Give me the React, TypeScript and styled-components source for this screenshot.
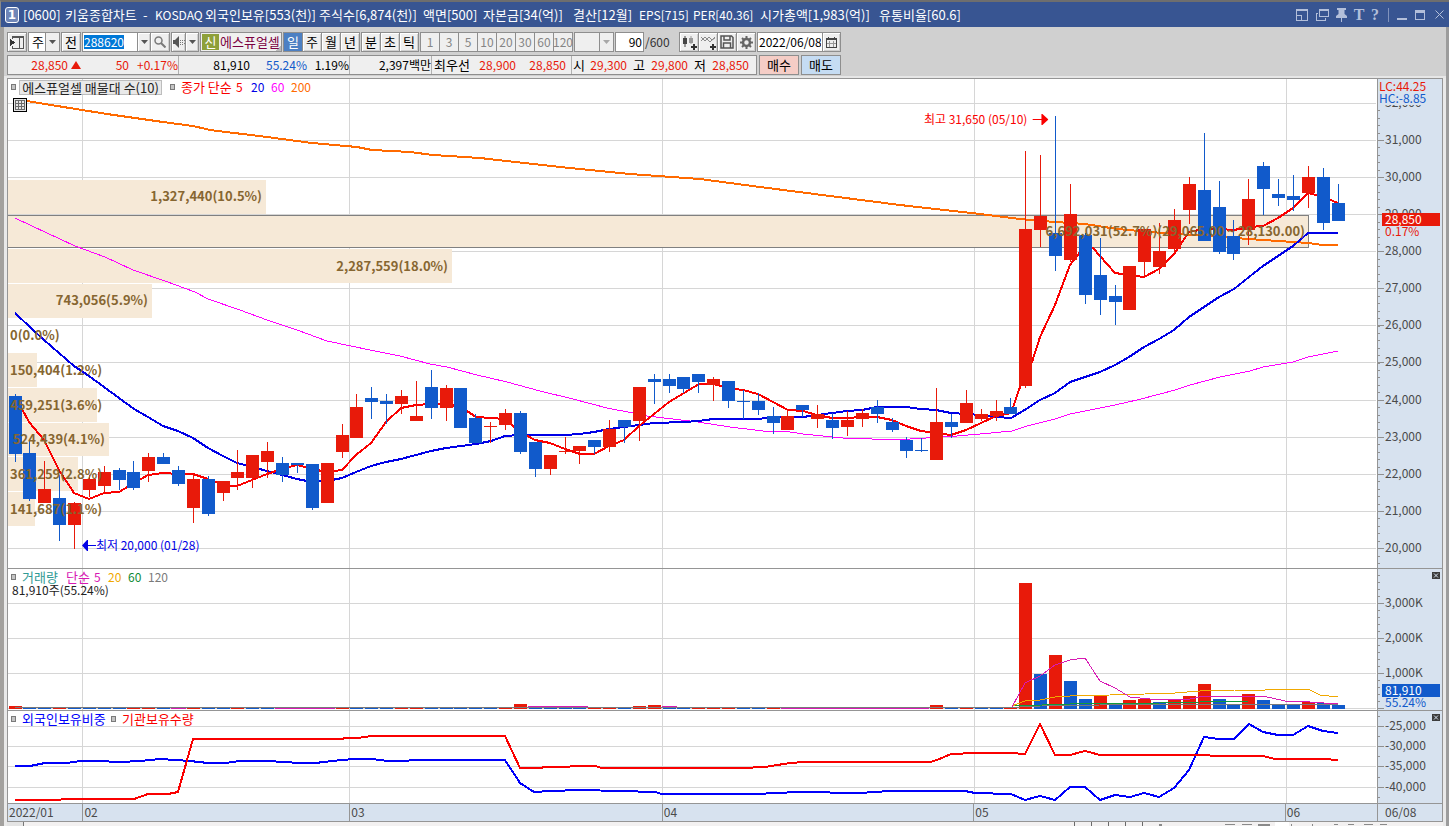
import React, { useEffect, useRef } from "react";
import styled, { createGlobalStyle, css } from "styled-components";

const UP = "#e81a0a";
const DOWN = "#115acb";
const LINE = "#959595";
const GRID = "#d6d6d6";
const AXIS = "#d7e2ef";
const FONT = `"Noto Sans CJK KR", sans-serif`;

const GlobalStyle = createGlobalStyle`
  * { box-sizing: border-box; }
  html, body { margin: 0; padding: 0; }
  body { font-family: ${FONT}; font-size: 13px; line-height: 14px; background: #e9e9e9; color: #000; }
  button, input, select { font: inherit; color: inherit; margin: 0; padding: 0; border: 0; border-radius: 0; background: none; }
  svg { display: block; }
`;

/* ---------- window shell ---------- */

const Window = styled.div`
  min-height: 100vh;
  display: flex;
  flex-direction: column;
`;

const TitleBar = styled.header`
  display: flex;
  align-items: center;
  height: 27px;
  border-top: 2px solid #6e6e6e;
  border-left: 1px solid #8a8a8a;
  background: #385592;
  color: #fff;
`;

const WindowBadge = styled.span`
  width: 14px;
  height: 16px;
  margin: 0 4px;
  border: 1px solid #fff;
  border-radius: 3px;
  background: #6f86b8;
  font-family: "DejaVu Sans", sans-serif;
  font-weight: bold;
  font-size: 12px;
  line-height: 14px;
  text-align: center;
`;

const TitleText = styled.h1`
  flex: 1;
  min-width: 0;
  display: flex;
  gap: 6px;
  margin: 0;
  font-size: 13px;
  font-weight: normal;
  line-height: 20px;
  white-space: nowrap;
`;

const TitlePart = styled.span<{ $w: number; $latin: boolean }>`
  flex: none;
  width: ${(p) => p.$w}px;
  font-size: ${(p) => (p.$latin ? 12 : 13)}px;
`;

const TitleButton = styled.button<{ $w: number }>`
  display: flex;
  align-items: center;
  justify-content: center;
  width: ${(p) => p.$w}px;
  height: 20px;
  color: #b3bfda;
  font-family: "Liberation Serif", serif;
  font-weight: bold;
  font-size: 16px;
`;

const TitleDivider = styled.span`
  width: 1px;
  height: 14px;
  margin: 0 4px 0 5px;
  background: #8193bd;
`;

const Body = styled.div`
  flex: 1;
  display: flex;
  flex-direction: column;
  border-left: 4px solid #a3a19e;
  border-right: 3px solid #9c9c9c;
`;

/* ---------- toolbars ---------- */

const Toolbar = styled.div`
  display: flex;
  flex-direction: column;
  gap: 3px;
  height: 49px;
  padding: 5px 3px 0;
  background: #d0d0d0;
`;

const ToolRow = styled.div`
  display: flex;
  gap: 1px;
  height: 20px;
`;

const Group = styled.div<{ $w: number }>`
  display: flex;
  flex: none;
  width: ${(p) => p.$w}px;
  height: 20px;
  border: 1px solid #8e8e8e;
  background: #f0f0f0;
  & > * + * { border-left: 1px solid #8e8e8e; }
`;

const ToolButton = styled.button<{ $on?: boolean; $dim?: boolean }>`
  flex: 1;
  min-width: 0;
  display: flex;
  align-items: center;
  justify-content: center;
  white-space: nowrap;
  background: #efefef;
  box-shadow: inset 1px 1px 0 #fff, inset -1px -1px 0 #cfcfcf;
  ${(p) => p.$dim && css`color: #858585; font-size: 12px; box-shadow: none;`}
  ${(p) => p.$on && css`background: #4d80c3; color: #fff; box-shadow: none;`}
`;

const ArrowButton = styled(ToolButton)`
  flex: none;
  width: 13px;
`;

const CalendarButton = styled(ToolButton)`
  flex: none;
  width: 18px;
`;

const CodeInput = styled.input`
  width: 54px;
  padding-left: 1px;
  background: #fff;
  font-size: 12px;
  outline: none;
  &::selection { background: #0078d7; color: #fff; }
`;

const PlainInput = styled.input<{ $right?: boolean }>`
  flex: 1;
  min-width: 0;
  padding: 0 1px;
  background: #fff;
  font-size: 12px;
  text-align: ${(p) => (p.$right ? "right" : "left")};
`;

const PickList = styled.select<{ $blank?: boolean }>`
  appearance: none;
  flex: 1;
  min-width: 0;
  padding-left: 3px;
  background: ${(p) => (p.$blank ? "#efefef" : "#fff")};
`;

const PickArrow = styled.span`
  display: flex;
  flex: none;
  align-items: center;
  justify-content: center;
  width: 14px;
  background: #efefef;
  pointer-events: none;
`;

const MarketTag = styled.span`
  flex: none;
  width: 17px;
  margin: 1px;
  background: #8ea03a;
  color: #fff;
  text-align: center;
  line-height: 16px;
`;

const StockName = styled.button`
  flex: 1;
  min-width: 0;
  && { border: 0; }
  color: #7b0041;
  white-space: nowrap;
  text-align: left;
  background: linear-gradient(135deg, transparent 52px, #b9b9b9 52px);
`;

const CountTotal = styled.span`
  flex: none;
  width: 33px;
  font-size: 12px;
  line-height: 20px;
  color: #333;
`;

const Quotes = styled.div`
  display: flex;
  width: 750px;
  height: 20px;
  border: 1px solid #8e8e8e;
  background: #efefef;
`;

const QuoteCell = styled.div`
  display: flex;
  align-items: center;
  & + & { border-left: 1px solid #b0b0b0; }
`;

const Quote = styled.span<{ $w: number; $color?: string }>`
  width: ${(p) => p.$w}px;
  color: ${(p) => p.$color || "#000"};
  font-size: 12px;
  text-align: right;
  white-space: nowrap;
`;

const QuoteName = styled(Quote)`
  font-size: 13px;
`;

const UpMark = styled.svg`
  margin-left: 3px;
`;

const OrderButton = styled.button<{ $bg: string }>`
  width: 40px;
  margin-left: 1px;
  border: 1px solid #8e8e8e;
  background: ${(p) => p.$bg};
`;

/* ---------- chart ---------- */

const ChartArea = styled.main`
  padding: 0 3px;
  border-top: 2px solid #e6e6e6;
`;

const ChartFrame = styled.div`
  border: 1px solid ${LINE};
  background: #fff;
  font-size: 12px;
`;

const Pane = styled.section<{ $h: number }>`
  display: grid;
  grid-template-columns: minmax(0, 1fr) 65px;
  height: ${(p) => p.$h}px;
  & + & { border-top: 1px solid ${LINE}; }
`;

const Plot = styled.div`
  position: relative;
`;

const PlotSvg = styled.svg`
  width: 100%;
  height: 100%;
  shape-rendering: crispEdges;
  polyline { fill: none; vector-effect: non-scaling-stroke; }
`;

const AxisBox = styled.div`
  position: relative;
  border-left: 1px solid ${LINE};
  background: ${AXIS};
  color: #4a4a4a;
`;

const AxisSvg = styled.svg`
  shape-rendering: crispEdges;
  text { font-family: ${FONT}; font-size: 12px; }
`;

const Legend = styled.div`
  position: absolute;
  top: 1px;
  left: 3px;
  display: flex;
  align-items: center;
  height: 14px;
  white-space: nowrap;
`;

const Bullet = styled.i`
  width: 5px;
  height: 6px;
  border: 1px solid #7a7a7a;
  background: #c4c4c4;
`;

const LegendName = styled.span<{ $w: number; $color: string }>`
  width: ${(p) => p.$w}px;
  color: ${(p) => p.$color};
  font-size: 13px;
`;

const LegendPeriod = styled(LegendName)`
  font-size: 12px;
`;

const LegendGap = styled.i<{ $w: number }>`
  width: ${(p) => p.$w}px;
`;

const LegendBox = styled.button`
  width: 143px;
  height: 15px;
  margin: 0 8px 0 3px;
  border: 1px solid #bdbdbd;
  background: #e9e9e9;
  color: #222;
  font-size: 13px;
  line-height: 13px;
  white-space: nowrap;
`;

const GridToggle = styled.button`
  position: absolute;
  top: 19px;
  left: 5px;
  width: 14px;
  height: 14px;
  border: 1px solid #000;
  background: #e4e4e4;
`;

const VolumeNote = styled.div`
  position: absolute;
  top: 14px;
  left: 4px;
  color: #222;
`;

const ProfileLabels = styled.ul`
  position: absolute;
  top: 100px;
  left: 0;
  width: 100%;
  height: 347px;
  margin: 0;
  padding: 0;
  list-style: none;
  display: flex;
  flex-direction: column;
  font-size: 13px;
  font-weight: bold;
  color: #866631;
`;

const ProfileLabel = styled.li<{ $share: number }>`
  flex: 1;
  display: flex;
  align-items: center;
  justify-content: flex-end;
  width: ${(p) => p.$share}%;
  min-width: max-content;
  padding: 0 4px 0 2px;
  white-space: nowrap;
`;

const Callout = styled.div<{ $x: number; $y: number; $color: string; $end?: boolean }>`
  position: absolute;
  top: ${(p) => p.$y}px;
  left: ${(p) => p.$x}%;
  display: flex;
  align-items: center;
  gap: ${(p) => (p.$end ? 5 : 0)}px;
  color: ${(p) => p.$color};
  white-space: nowrap;
  ${(p) => p.$end && css`transform: translateX(-100%);`}
`;

const CloseButton = styled.button`
  position: absolute;
  top: 3px;
  right: 2px;
  width: 8px;
  height: 7px;
  background: #3c3c3c;
`;

const DateRow = styled.div`
  display: grid;
  grid-template-columns: minmax(0, 1fr) 65px;
  height: 18px;
  border-top: 1px solid ${LINE};
  background: ${AXIS};
  color: #4a4a4a;
  line-height: 15px;
`;

const Months = styled.div`
  display: flex;
`;

const Month = styled.span<{ $days: number }>`
  flex: ${(p) => p.$days} 1 0;
  padding-left: 1px;
  & + & { border-left: 1px solid ${LINE}; }
`;

const LastDate = styled.span`
  border-left: 1px solid ${LINE};
  padding-left: 7px;
`;

const BottomStrip = styled.footer`
  flex: 1;
  display: flex;
  justify-content: space-between;
  height: 4px;
  max-height: 24px;
  overflow: hidden;
  margin: 0 3px;
  background: #f3f1f1;
`;

const BottomTab = styled.span`
  width: 17px;
  border-right: 1px solid #777;
  background: #e4e4e4;
`;

/* ---------- data ---------- */

const LEFT = 8;
const DAYS = 90;
const dayX = (i: number) => Math.floor(15 + (i * 1323) / (DAYS - 1));

type Candle = [1 | 0, number, number, number, number];

/* direction, high, body top, body bottom, low */
const candles: Candle[] = [
  [0, 394, 396, 454, 462], [0, 440, 453, 499, 501], [1, 461, 489, 503, 503], [0, 475, 498, 525, 541], [1, 502, 503, 525, 549],
  [1, 475, 479, 490, 497], [1, 466, 472, 486, 492], [0, 468, 470, 480, 490], [0, 461, 472, 488, 490], [1, 453, 457, 471, 482],
  [0, 453, 457, 464, 464], [0, 466, 470, 484, 486], [1, 474, 479, 508, 523], [0, 476, 479, 514, 516], [1, 481, 481, 493, 501],
  [1, 450, 472, 478, 490], [1, 455, 455, 478, 488], [1, 442, 451, 462, 478], [0, 457, 463, 475, 482], [0, 463, 463, 465, 473],
  [0, 464, 464, 508, 510], [1, 463, 463, 503, 503], [1, 424, 435, 452, 458], [1, 394, 407, 438, 438], [0, 387, 398, 402, 419],
  [0, 394, 401, 404, 424], [1, 390, 396, 404, 414], [1, 381, 416, 421, 421], [0, 370, 387, 408, 419], [1, 385, 388, 408, 421],
  [0, 388, 388, 428, 428], [0, 414, 418, 443, 443], [1, 422, 426, 427, 443], [1, 409, 413, 425, 430], [0, 411, 413, 452, 454],
  [0, 442, 442, 469, 477], [1, 455, 455, 469, 475], [1, 437, 451, 452, 454], [1, 446, 446, 451, 464], [0, 440, 440, 447, 454],
  [1, 420, 429, 447, 452], [0, 420, 420, 427, 443], [1, 387, 387, 421, 441], [0, 374, 379, 382, 404], [0, 374, 379, 386, 393],
  [0, 377, 377, 389, 393], [0, 374, 374, 382, 393], [1, 377, 379, 385, 401], [0, 381, 381, 401, 408], [0, 390, 401, 402, 419],
  [0, 393, 401, 410, 415], [0, 407, 416, 423, 434], [1, 410, 416, 430, 430], [0, 405, 405, 410, 417], [1, 405, 414, 419, 428],
  [0, 413, 420, 428, 439], [1, 411, 420, 427, 436], [1, 409, 413, 419, 427], [0, 400, 407, 414, 423], [0, 418, 422, 430, 432],
  [0, 437, 440, 451, 458], [0, 438, 450, 451, 452], [1, 388, 422, 460, 460], [0, 414, 422, 427, 438], [1, 390, 403, 423, 423],
  [1, 409, 414, 419, 421], [1, 400, 411, 416, 421], [0, 398, 407, 414, 414], [1, 151, 229, 386, 388], [1, 155, 216, 230, 247],
  [0, 116, 233, 256, 271], [1, 184, 214, 260, 262], [0, 233, 235, 295, 304], [0, 238, 275, 300, 315], [0, 285, 296, 302, 325],
  [1, 266, 266, 310, 310], [1, 229, 229, 262, 276], [1, 223, 251, 267, 274], [1, 209, 220, 249, 253], [1, 177, 184, 210, 224],
  [0, 133, 190, 241, 241], [0, 181, 207, 252, 254], [0, 220, 236, 254, 260], [1, 179, 199, 230, 245], [0, 162, 166, 189, 215],
  [0, 179, 194, 198, 206], [0, 175, 196, 200, 211], [1, 166, 177, 193, 208], [0, 168, 177, 223, 230], [0, 184, 203, 221, 221],
];

const ma5 = "15,399 22,409 29,422 44,440 59,470 74,493 89,499 104,493 119,492 134,483 148,475 163,473 178,474 193,474 208,479 223,485 237,486 252,480 267,474 282,469 297,465 312,469 327,472 342,470 356,455 371,443 386,422 401,408 416,405 431,404 446,404 461,407 476,417 491,418 505,419 520,432 535,440 550,443 565,449 580,454 594,454 609,446 624,440 639,426 654,414 669,402 684,393 699,384 713,384 728,388 743,390 758,394 773,402 788,410 803,411 817,415 832,418 847,418 862,417 877,417 892,420 906,426 921,431 936,433 951,435 966,430 981,423 996,416 1011,413 1020,387 1032,362 1040,337 1055,305 1070,265 1080,252 1085,246 1093,248 1100,256 1115,273 1129,275 1144,277 1159,269 1174,254 1189,232 1204,229 1219,229 1234,230 1249,227 1263,226 1278,218 1293,208 1308,193 1323,197 1338,203";
const ma20 = "15,313 32,329 44,340 59,353 74,366 89,376 104,387 119,398 134,409 148,417 163,426 178,431 193,438 208,448 223,456 237,463 252,467 267,471 282,475 297,479 312,482 327,481 342,478 356,472 371,466 386,462 401,459 416,455 431,451 446,448 461,446 476,444 491,441 505,436 520,435 565,435 580,434 594,432 609,429 624,427 639,425 654,423 684,422 699,421 713,419 758,419 773,417 803,417 817,415 832,413 847,411 862,410 877,407 906,407 921,409 936,410 951,413 966,414 981,415 996,417 1011,418 1023,411 1040,400 1055,393 1070,382 1100,372 1115,365 1129,357 1144,347 1159,339 1174,330 1189,317 1219,297 1234,289 1249,277 1263,266 1293,246 1308,233 1338,233";
const ma60 = "15,218 32,226 47,233 75,246 105,257 133,270 165,281 195,292 208,299 240,310 267,320 297,330 327,341 370,350 400,356 430,364 447,367 477,375 507,382 540,391 573,399 607,408 633,413 647,416 698,422 730,427 763,431 790,432 803,434 843,438 872,439 910,439 957,436 980,434 1012,431 1027,426 1055,419 1070,414 1115,405 1137,400 1160,394 1175,390 1190,385 1220,377 1250,371 1263,367 1293,362 1308,357 1338,351";
const ma200 = "27,101 45,104 82,110 107,114 163,122 178,124 193,126 210,130 267,137 312,143 357,147 372,150 410,152 433,155 480,158 560,167 630,174 700,179 760,187 830,196 900,205 980,214 1020,219 1055,222 1085,224 1117,229 1163,233 1220,237 1263,240 1308,243 1323,245 1338,245";

/* days with a red volume bar, and the tops of the bars that rise above the base line */
const volumeUp = new Set([
  0, 3, 8, 9, 12, 15, 22, 26, 27, 33, 34, 39, 40, 42, 43, 46, 47, 48, 51, 62, 64, 67, 68, 70, 73, 75, 76, 78, 79, 80, 83, 87,
]);
const volumeTops: Record<number, number> = {
  0: 706, 34: 704, 42: 706, 43: 705, 62: 705, 68: 583, 69: 674, 70: 655, 71: 681, 72: 699, 73: 695, 74: 703, 75: 700, 76: 699, 77: 702,
  78: 700, 79: 696, 80: 684, 81: 699, 82: 704, 83: 694, 84: 700, 85: 704, 86: 704, 87: 702, 88: 703, 89: 705,
};

const volMa5 = "1012,707 1025,683 1040,676 1055,665 1070,660 1085,658 1100,681 1115,688 1130,697 1160,700 1190,699 1204,696 1225,696 1235,697 1249,696 1263,696 1285,701 1310,702 1338,704";
const volMa20 = "1012,706 1025,701 1040,700 1055,697 1070,696 1110,695 1145,694 1175,693 1200,691 1235,690 1265,690 1275,689 1308,689 1320,695 1338,697";
const volMa60 = "1015,706 1070,704 1160,703 1200,702 1249,701 1338,701";
const volMa120 = "15,707 1020,707 1040,706 1100,705 1338,704";

const institution = "15,800 60,800 62,799 134,799 148,794 168,794 178,792 193,739 342,739 345,738 357,738 372,736 505,736 520,768 540,768 545,767 565,767 575,766 595,766 602,768 742,768 765,767 790,763 805,762 930,762 937,760 951,754 975,753 1010,753 1025,754 1040,724 1055,755 1070,755 1085,751 1100,755 1204,755 1215,756 1263,756 1275,759 1323,759 1338,760";
const foreign = "15,766 30,766 45,763 67,763 80,761 97,761 120,762 140,761 160,759 190,761 208,763 225,763 240,761 268,761 300,763 315,763 342,760 355,759 372,759 388,761 430,760 505,760 520,783 534,792 550,791 580,790 620,791 655,792 662,794 758,794 775,793 800,792 860,793 890,791 965,791 975,793 1011,794 1025,800 1040,796 1055,800 1070,787 1085,787 1100,800 1115,795 1130,797 1144,793 1159,797 1174,788 1189,770 1204,737 1219,739 1234,739 1249,724 1263,732 1278,735 1293,735 1308,726 1323,731 1338,733";

const profile: { top: number; h: number; right: number; label: string }[] = [
  { top: 180, h: 34, right: 266, label: "1,327,440(10.5%)" },
  { top: 215, h: 33, right: 1309, label: "6,692,031(52.7%)(29,065.00 ~ 28,130.00)" },
  { top: 249, h: 34, right: 452, label: "2,287,559(18.0%)" },
  { top: 284, h: 34, right: 152, label: "743,056(5.9%)" },
  { top: 319, h: 0, right: 8, label: "0(0.0%)" },
  { top: 353, h: 34, right: 37, label: "150,404(1.2%)" },
  { top: 388, h: 34, right: 97, label: "459,251(3.6%)" },
  { top: 423, h: 33, right: 109, label: "524,439(4.1%)" },
  { top: 457, h: 34, right: 78, label: "361,259(2.8%)" },
  { top: 492, h: 34, right: 35, label: "141,687(1.1%)" },
];

const monthLines = [82, 349, 662, 974, 1286];
const priceLines = [103, 140, 177, 214, 251, 288, 325, 362, 400, 437, 474, 511, 548];
const volumeLines = [603, 638, 673, 708];
const holdingLines = [726, 746, 766, 787];

/* ---------- chart pieces ---------- */

const GridLines = ({ rows, top, h }: { rows: number[]; top: number; h: number }) => (
  <g fill={GRID}>
    {rows.map((y) => <rect key={y} x={LEFT} y={y} width={1368} height={1} />)}
    {monthLines.map((x) => <rect key={x} x={x} y={top} width={1} height={h} />)}
  </g>
);

const Ticks = ({ majors, minors }: { majors: number[]; minors: number[] }) => (
  <g fill="#8f8f8f">
    {majors.map((y) => <rect key={y} x={0} y={y} width={6} height={1} />)}
    {minors.map((y) => <rect key={y} x={0} y={y} width={2} height={1} />)}
  </g>
);

const PricePane = () => {
  const minors: number[] = [];
  for (let y = 548 + 15; y > 108; y -= 7.42) minors.push(Math.round(y));
  return (
    <Pane $h={489}>
      <Plot>
        <PlotSvg viewBox="8 79 1369 489" preserveAspectRatio="none">
          <GridLines rows={priceLines} top={79} h={489} />
          {profile.map((b, i) => (
            <rect key={b.label} x={LEFT} y={b.top} width={b.right - LEFT} height={b.h} fill={i === 1 ? "#808080" : "#f6e9d7"} />
          ))}
          <rect x={LEFT} y={216} width={1300} height={31} fill="#f6e9d7" />
          <polyline points={ma200} stroke="#ff6a00" strokeWidth={2} />
          <polyline points={ma60} stroke="#ff00ff" strokeWidth={1} />
          <polyline points={ma20} stroke="#0000e6" strokeWidth={2} />
          <polyline points={ma5} stroke="#fa0000" strokeWidth={2} />
          {candles.map(([up, high, top, bottom, low], i) => (
            <g key={i} fill={up ? UP : DOWN}>
              <rect x={dayX(i)} y={high} width={1} height={low - high} />
              <rect x={dayX(i) - 6} y={top} width={13} height={bottom - top} />
            </g>
          ))}
        </PlotSvg>
        <Legend>
          <Bullet />
          <LegendBox type="button">에스퓨얼셀 매물대 수(10)</LegendBox>
          <Bullet />
          <LegendGap $w={6} />
          <LegendName $w={55} $color="#fa0000">종가 단순</LegendName>
          <LegendPeriod $w={15} $color="#fa0000">5</LegendPeriod>
          <LegendPeriod $w={20} $color="#0000e6">20</LegendPeriod>
          <LegendPeriod $w={20} $color="#ff00ff">60</LegendPeriod>
          <LegendPeriod $w={20} $color="#ff6a00">200</LegendPeriod>
        </Legend>
        <GridToggle type="button" aria-label="데이터 표">
          <svg width="12" height="12" viewBox="0 0 12 12" shapeRendering="crispEdges">
            <path d="M1.5 1.5h9v9h-9zM1.5 4.5h9M1.5 7.5h9M4.5 1.5v9M7.5 1.5v9" fill="none" stroke="#6a6a6a" />
          </svg>
        </GridToggle>
        <ProfileLabels>
          {profile.map((b) => (
            <ProfileLabel key={b.label} $share={((b.right - LEFT) / 1369) * 100}>{b.label}</ProfileLabel>
          ))}
        </ProfileLabels>
        <Callout $x={76} $y={33} $color="#fa0000" $end>
          최고 31,650 (05/10)
          <svg width="16" height="12" viewBox="0 0 16 12"><path d="M0 6h9V1h1l6 5.500L10 12H9V7H0z" fill="#fa0000" /></svg>
        </Callout>
        <Callout $x={5.4} $y={459} $color="#0000e6">
          <svg width="14" height="12" viewBox="0 0 14 12"><path d="M14 6H6V1H5L0 6.500 5 12h1V7h8z" fill="#0000e6" /></svg>
          최저 20,000 (01/28)
        </Callout>
      </Plot>
      <AxisBox>
        <AxisSvg width="64" height="489" viewBox="0 79 64 489">
          <Ticks majors={priceLines.slice(1)} minors={minors} />
          {priceLines.map((y, i) => (
            <text key={y} x={7} y={y + 4} fill="#4a4a4a">{`${32 - i},000`}</text>
          ))}
          <rect x={0} y={79} width={63} height={26} fill={AXIS} />
          <text x={1} y={91} fill={UP}>LC:44.25</text>
          <text x={1} y={103} fill={DOWN}>HC:-8.85</text>
          <rect x={4} y={213} width={58} height={13} fill={UP} />
          <text x={7} y={224} fill="#fff">28,850</text>
          <text x={7} y={236} fill={UP}>0.17%</text>
        </AxisSvg>
      </AxisBox>
    </Pane>
  );
};

const CloseMark = () => (
  <CloseButton type="button" aria-label="지표 닫기">
    <svg width="8" height="7" viewBox="0 0 8 7"><path d="M2 1.5l4 4M6 1.5l-4 4" stroke="#d7e2ef" /></svg>
  </CloseButton>
);

const VolumePane = () => {
  const minors: number[] = [];
  for (let y = 701; y > 572; y -= 7) minors.push(y);
  return (
    <Pane $h={142}>
      <Plot>
        <PlotSvg viewBox="8 569 1369 141" preserveAspectRatio="none">
          <GridLines rows={volumeLines} top={569} h={141} />
          {candles.map((_, i) => {
            const top = volumeTops[i] ?? 708;
            return <rect key={i} x={dayX(i) - 6} y={top} width={13} height={709 - top} fill={volumeUp.has(i) ? UP : DOWN} />;
          })}
          <rect x={15} y={707} width={305} height={1} fill="#0f9a3c" />
          <g fill="#d81ab4">
            <rect x={171} y={708} width={15} height={1} />
            <rect x={275} y={708} width={60} height={1} />
            <rect x={528} y={706} width={60} height={1} />
            <rect x={662} y={706} width={15} height={1} />
            <rect x={781} y={708} width={148} height={1} />
          </g>
          <polyline points={volMa120} stroke="#7a7a7a" strokeWidth={1} />
          <polyline points={volMa60} stroke="#0f9a3c" strokeWidth={1} />
          <polyline points={volMa20} stroke="#f0a800" strokeWidth={1} />
          <polyline points={volMa5} stroke="#d81ab4" strokeWidth={1} />
        </PlotSvg>
        <Legend>
          <Bullet />
          <LegendGap $w={6} />
          <LegendName $w={44} $color="#2f9a94">거래량</LegendName>
          <LegendName $w={28} $color="#d81ab4">단순</LegendName>
          <LegendPeriod $w={14} $color="#d81ab4">5</LegendPeriod>
          <LegendPeriod $w={20} $color="#f0a800">20</LegendPeriod>
          <LegendPeriod $w={20} $color="#0f8a34">60</LegendPeriod>
          <LegendPeriod $w={20} $color="#7a7a7a">120</LegendPeriod>
        </Legend>
        <VolumeNote>81,910주(55.24%)</VolumeNote>
      </Plot>
      <AxisBox>
        <AxisSvg width="64" height="141" viewBox="0 569 64 141">
          <Ticks majors={volumeLines} minors={minors} />
          <g fill="#4a4a4a">
            <text x={7} y={607}>3,000K</text>
            <text x={7} y={642}>2,000K</text>
            <text x={7} y={677}>1,000K</text>
          </g>
          <rect x={4} y={684} width={58} height={13} fill={DOWN} />
          <text x={7} y={695} fill="#fff">81,910</text>
          <text x={7} y={707} fill={DOWN}>55.24%</text>
        </AxisSvg>
        <CloseMark />
      </AxisBox>
    </Pane>
  );
};

const HoldingPane = () => (
  <Pane $h={93}>
    <Plot>
      <PlotSvg viewBox="8 711 1369 92" preserveAspectRatio="none">
        <GridLines rows={holdingLines} top={711} h={92} />
        <polyline points={foreign} stroke="#0000fa" strokeWidth={2} />
        <polyline points={institution} stroke="#fa0000" strokeWidth={2} />
      </PlotSvg>
      <Legend>
        <Bullet />
        <LegendGap $w={6} />
        <LegendName $w={89} $color="#0000fa">외국인보유비중</LegendName>
        <Bullet />
        <LegendGap $w={6} />
        <LegendName $w={80} $color="#fa0000">기관보유수량</LegendName>
      </Legend>
    </Plot>
    <AxisBox>
      <AxisSvg width="64" height="92" viewBox="0 711 64 92">
        <Ticks majors={holdingLines} minors={[716, 736, 756, 777, 797]} />
        <g fill="#4a4a4a">
          {holdingLines.map((y, i) => (
            <text key={y} x={7} y={y + 4}>{`-${25 + i * 5},000`}</text>
          ))}
        </g>
      </AxisSvg>
      <CloseMark />
    </AxisBox>
  </Pane>
);

/* ---------- toolbar pieces ---------- */

const DownArrow = ({ dim }: { dim?: boolean }) => (
  <svg width="7" height="4" viewBox="0 0 7 4"><path d="M0 0h7L3.5 4z" fill={dim ? "#a8a8a8" : "#555"} /></svg>
);

const periods = ["일", "주", "월", "년"];
const intraday = ["분", "초", "틱"];
const minutes = ["1", "3", "5", "10", "20", "30", "60", "120"];

const titleParts: [string, number][] = [
  ["[0600]", 36], ["키움종합차트", 72], ["-", 6], ["KOSDAQ", 44], ["외국인보유[553(천)]", 108], ["주식수[6,874(천)]", 98],
  ["액면[500]", 54], ["자본금[34(억)]", 84], ["결산[12월]", 60], ["EPS[715]", 48], ["PER[40.36]", 61],
  ["시가총액[1,983(억)]", 113], ["유통비율[60.6]", 84],
];
const isLatin = (text: string) => /^[A-Z]/.test(text);

export default function App() {
  const codeRef = useRef<HTMLInputElement>(null);
  useEffect(() => {
    codeRef.current?.focus();
    codeRef.current?.select();
  }, []);

  return (
    <Window>
      <GlobalStyle />
      <TitleBar>
        <WindowBadge>1</WindowBadge>
        <TitleText>
          {titleParts.map(([text, w]) => (
            <TitlePart key={text} $w={w} $latin={isLatin(text)}>{text}</TitlePart>
          ))}
        </TitleText>
        <TitleButton type="button" $w={20} aria-label="크기 조정">
          <svg width="12" height="12" viewBox="0 0 12 12" fill="none" stroke="currentColor" shapeRendering="crispEdges"><path d="M.5 .5h11v11H.5zM0 1.5h12M.5 6.5h5v5M3 6.5h3" /></svg>
        </TitleButton>
        <TitleButton type="button" $w={20} aria-label="창 복제">
          <svg width="13" height="12" viewBox="0 0 13 12" fill="none" stroke="currentColor" shapeRendering="crispEdges"><path d="M3.5 .5h9v7h-9zM3 1.5h10M2 4.5H.5v7h9V9" /></svg>
        </TitleButton>
        <TitleButton type="button" $w={19} aria-label="고정">
          <svg width="11" height="14" viewBox="0 0 11 14" fill="currentColor"><path d="M1 0h9v2H8.500v4L11 8v2H6v4H5v-4H0V8l2.500-2V2H1z" /></svg>
        </TitleButton>
        <TitleButton type="button" $w={16}>T</TitleButton>
        <TitleButton type="button" $w={16}>?</TitleButton>
        <TitleDivider />
        <TitleButton type="button" $w={18} aria-label="최소화">
          <svg width="10" height="12" viewBox="0 0 10 12"><path d="M0 9h10v2H0z" fill="currentColor" /></svg>
        </TitleButton>
        <TitleButton type="button" $w={18} aria-label="최대화">
          <svg width="10" height="10" viewBox="0 0 10 10" shapeRendering="crispEdges"><path d="M0 0h10v10H0zM1 3v6h8V3z" fill="currentColor" fillRule="evenodd" /></svg>
        </TitleButton>
        <TitleButton type="button" $w={20} aria-label="닫기">
          <svg width="9" height="9" viewBox="0 0 9 9"><path d="M.5 .5l8 8M8.500 .5l-8 8" stroke="currentColor" /></svg>
        </TitleButton>
      </TitleBar>

      <Body>
        <Toolbar>
          <ToolRow>
            <Group $w={20}>
              <ToolButton type="button" aria-label="메뉴 펼치기">
                <svg width="14" height="13" viewBox="0 0 14 13" shapeRendering="crispEdges"><path d="M2.500 3V.5h11v12h-11V10M3 1.500h10M9.500 2v10" fill="none" stroke="#555" /><path d="M0 3l5 3.500L0 10z" fill="#333" /></svg>
              </ToolButton>
            </Group>
            <Group $w={32}>
              <PickList aria-label="종목 구분" defaultValue="주"><option>주</option></PickList>
              <PickArrow><DownArrow /></PickArrow>
            </Group>
            <Group $w={20}><ToolButton type="button">전</ToolButton></Group>
            <Group $w={88}>
              <CodeInput ref={codeRef} aria-label="종목 코드" defaultValue="288620" />
              <ArrowButton type="button" aria-label="최근 종목"><DownArrow /></ArrowButton>
              <ToolButton type="button" aria-label="종목 검색">
                <svg width="12" height="12" viewBox="0 0 12 12" fill="none" stroke="#7a7a7a"><circle cx="4.500" cy="4.500" r="3.500" strokeWidth="1.500" /><path d="M7 7l4.500 4.500" strokeWidth="2" /></svg>
              </ToolButton>
            </Group>
            <Group $w={28}>
              <ToolButton type="button" aria-label="음성">
                <svg width="12" height="12" viewBox="0 0 12 12"><path d="M0 4h2l4-4v12L2 8H0z" fill="#555" /><path d="M7.500 4v5M9.500 4v5M11.500 4v1M11.500 7v1" stroke="#777" strokeDasharray="1 1" /></svg>
              </ToolButton>
              <ArrowButton type="button" aria-label="음성 설정"><DownArrow /></ArrowButton>
            </Group>
            <Group $w={82}>
              <MarketTag>신</MarketTag>
              <StockName type="button">에스퓨얼셀</StockName>
            </Group>
            <Group $w={77}>
              {periods.map((p, i) => <ToolButton type="button" key={p} $on={i === 0}>{p}</ToolButton>)}
            </Group>
            <Group $w={58}>
              {intraday.map((p) => <ToolButton type="button" key={p}>{p}</ToolButton>)}
            </Group>
            <Group $w={153}>
              {minutes.map((m) => <ToolButton type="button" key={m} $dim>{m}</ToolButton>)}
            </Group>
            <Group $w={40}>
              <PickList aria-label="분 주기" $blank><option></option></PickList>
              <PickArrow><DownArrow dim /></PickArrow>
            </Group>
            <Group $w={29}><PlainInput aria-label="표시 개수" defaultValue="90" $right /></Group>
            <CountTotal>/600</CountTotal>
            <Group $w={77}>
              <ToolButton type="button" aria-label="차트 추가">
                <svg width="15" height="15" viewBox="0 0 15 15"><path d="M1 3h4v6H1zM2.500 1h1v11h-1z" fill="#444" /><path d="M7 3h4v5H7zM8.500 1h1v8h-1z" fill="#999" /><path d="M12 9v6M9 12h6" stroke="#333" strokeWidth="2" /></svg>
              </ToolButton>
              <ToolButton type="button" aria-label="지표 추가">
                <svg width="15" height="15" viewBox="0 0 15 15"><path d="M0 6l4-4 5 5 5-5M0 2l4 4 4-4 3 3 3-2" fill="none" stroke="#8a8a8a" /><path d="M12 9v6M9 12h6" stroke="#333" strokeWidth="2" /></svg>
              </ToolButton>
              <ToolButton type="button" aria-label="저장">
                <svg width="14" height="14" viewBox="0 0 14 14" fill="none" stroke="#555" strokeWidth="1.500"><path d="M1 1h10.500L13 2.500V13H1zM4 1v4h6V1M3.500 13V8h7v5" /></svg>
              </ToolButton>
              <ToolButton type="button" aria-label="설정">
                <svg width="13" height="13" viewBox="0 0 13 13" fill="none" stroke="#666"><circle cx="6.500" cy="6.500" r="3.500" strokeWidth="2.500" /><path d="M6.500 0v3M6.500 10v3M0 6.500h3M10 6.500h3M2 2l2 2M9 9l2 2M11 2L9 4M4 9l-2 2" strokeWidth="2" /></svg>
              </ToolButton>
            </Group>
            <Group $w={84}>
              <PlainInput aria-label="기준일" defaultValue="2022/06/08" />
              <CalendarButton type="button" aria-label="달력">
                <svg width="11" height="11" viewBox="0 0 11 11" shapeRendering="crispEdges"><path d="M.5 1.500h10v9H.5zM.5 6.500h10M3.500 4v6M7.500 4v6" fill="none" stroke="#999" /><path d="M0 1h11v2H0zM2 0h1v1H2zM8 0h1v1H8zM0 1h1v10H0zM10 1h1v10h-1zM0 10h11v1H0z" fill="#444" /></svg>
              </CalendarButton>
            </Group>
          </ToolRow>
          <ToolRow>
            <Quotes>
              <QuoteCell>
                <Quote $w={60} $color={UP}>28,850</Quote>
                <UpMark width="10" height="8" viewBox="0 0 10 8"><path d="M5 0l5 8H0z" fill={UP} /></UpMark>
                <Quote $w={48} $color={UP}>50</Quote>
                <Quote $w={49} $color={UP}>+0.17%</Quote>
              </QuoteCell>
              <QuoteCell>
                <Quote $w={71}>81,910</Quote>
                <Quote $w={57} $color={DOWN}>55.24%</Quote>
                <Quote $w={42}>1.19%</Quote>
              </QuoteCell>
              <QuoteCell><Quote $w={81}>2,397백만</Quote></QuoteCell>
              <QuoteCell>
                <QuoteName $w={38}>최우선</QuoteName>
                <Quote $w={46} $color={UP}>28,900</Quote>
                <Quote $w={50} $color={UP}>28,850</Quote>
                <LegendGap $w={5} />
              </QuoteCell>
              <QuoteCell>
                <QuoteName $w={13}>시</QuoteName>
                <Quote $w={42} $color={UP}>29,300</Quote>
                <QuoteName $w={18}>고</QuoteName>
                <Quote $w={43} $color={UP}>29,800</Quote>
                <QuoteName $w={18}>저</QuoteName>
                <Quote $w={43} $color={UP}>28,850</Quote>
              </QuoteCell>
            </Quotes>
            <OrderButton type="button" $bg="#f5cdc6">매수</OrderButton>
            <OrderButton type="button" $bg="#c5dcf3">매도</OrderButton>
          </ToolRow>
        </Toolbar>

        <ChartArea>
          <ChartFrame>
            <PricePane />
            <VolumePane />
            <HoldingPane />
            <DateRow>
              <Months>
                <Month $days={74}>2022/01</Month>
                <Month $days={267}>02</Month>
                <Month $days={313}>03</Month>
                <Month $days={312}>04</Month>
                <Month $days={312}>05</Month>
                <Month $days={91}>06</Month>
              </Months>
              <LastDate>06/08</LastDate>
            </DateRow>
          </ChartFrame>
        </ChartArea>
        <BottomStrip>
          <BottomTab />
          <svg width="380" height="4" viewBox="0 0 380 4" shapeRendering="crispEdges">
            <path d="M11 0h1v4h-1zM28 0h1v4h-1zM45 0h1v4h-1zM62 0h1v4h-1zM79 0h1v4h-1z" fill="#6a6a6a" />
            <path d="M96 2h3v2h-3zM162 2h10v1h-10zM179 2h10v1h-10zM195 2h12v2h-12zM228 2h1v2h-1zM249 2h1v2h-1zM271 2h4v1h-4zM285 2h6v1h-6zM301 2h9v1h-9zM317 2h7v1h-7z" fill="#8a8a8a" />
            <path d="M212 0h14v4h-14z" fill="#fff" />
          </svg>
        </BottomStrip>
      </Body>
    </Window>
  );
}
